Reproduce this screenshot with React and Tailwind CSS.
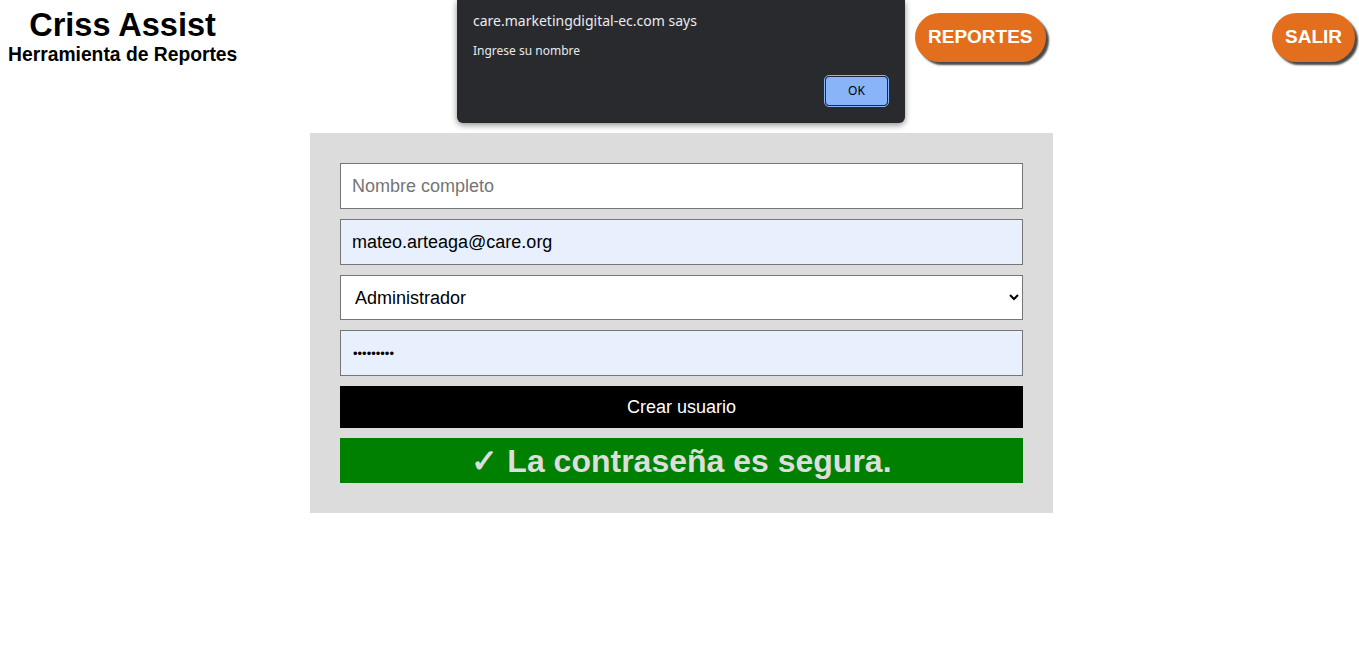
import React from 'react';

const NavButton = ({ label, className = '' }) => (
  <button
    type="button"
    className={`h-[49px] px-[13px] rounded-full bg-[#e36f1e] text-white text-[19px] font-bold shadow-[3px_3px_2px_#4a4a4a] ${className}`}
  >
    {label}
  </button>
);

const App = () => {
  return (
    <div className="relative min-h-screen bg-white font-['Liberation_Sans',Arial,sans-serif] text-black">
      {/* Header */}
      <div className="flex items-start h-[133px]">
        <div className="ml-[8px] w-[229px] text-center">
          <h1 className="mt-[7px] text-[32.5px] font-bold leading-[37px]">Criss Assist</h1>
          <h3 className="text-[19.3px] font-bold leading-[22px] whitespace-nowrap">Herramienta de Reportes</h3>
        </div>
        <NavButton label="REPORTES" className="ml-[678px] mt-[13px]" />
        <NavButton label="SALIR" className="ml-auto mr-[4px] mt-[13px]" />
      </div>

      {/* Form panel */}
      <div className="ml-[310px] w-[743px] bg-[#dcdcdc] p-[30px] flex flex-col gap-[10px]">
        <input
          type="text"
          placeholder="Nombre completo"
          className="h-[46px] bg-white border border-[#767676] px-[11px] text-[18px] placeholder:text-[#757575] outline-none"
        />
        <input
          type="email"
          defaultValue="mateo.arteaga@care.org"
          className="h-[46px] bg-[#e8f0fe] border border-[#767676] px-[11px] text-[18px] outline-none"
        />
        <select
          defaultValue="admin"
          className="h-[45px] bg-white border border-[#767676] px-[10px] text-[18px] outline-none"
        >
          <option value="admin">Administrador</option>
          <option value="user">Usuario</option>
        </select>
        <input
          type="password"
          defaultValue="123456789"
          className="h-[46px] bg-[#e8f0fe] border border-[#767676] px-[12px] text-[13px] outline-none"
        />
        <button type="button" className="h-[42px] bg-black text-white text-[18px]">
          Crear usuario
        </button>
        <div className="h-[45px] bg-[#008000] text-[#dddddd] text-[32px] font-bold flex items-center justify-center leading-none">
          ✓ La contraseña es segura.
        </div>
      </div>

      {/* Browser alert dialog */}
      <div className="absolute left-[457px] top-0 w-[448px] h-[123px] bg-[#292a2d] rounded-b-[6px] shadow-[0_2px_6px_rgba(0,0,0,0.45)] font-['Noto_Sans',sans-serif] text-[#e8eaed] px-[16px] pt-[10px]">
        <p className="text-[14px] leading-[22px]">care.marketingdigital-ec.com says</p>
        <p className="mt-[10px] text-[12px] leading-[18px]">Ingrese su nombre</p>
        <div className="flex justify-end mt-[15px]">
          <button
            type="button"
            className="w-[65px] h-[32px] rounded-[5px] border border-[#8ab4f8] p-0"
          >
            <span className="flex w-full h-full items-center justify-center rounded-[4px] border border-[#1f2a3a] bg-[#8ab4f8] text-black text-[12px]">
              OK
            </span>
          </button>
        </div>
      </div>
    </div>
  );
};

export default App;
